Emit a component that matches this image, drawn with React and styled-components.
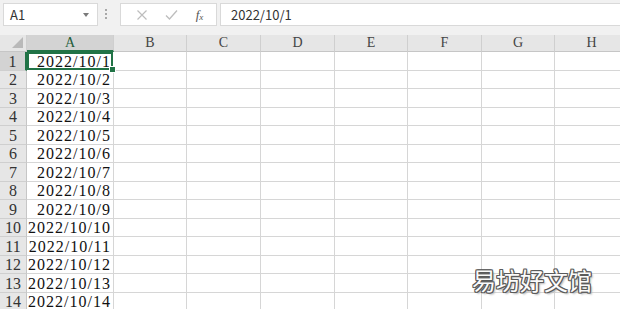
import React from "react";
import styled, { createGlobalStyle } from "styled-components";

const Global = createGlobalStyle`
  html, body { margin: 0; padding: 0; background: #fff; overflow: hidden; }
  body { width: 620px; height: 309px; }
`;

const Page = styled.div`
  position: relative;
  width: 620px;
  height: 309px;
  overflow: hidden;
  background: #fff;
`;

const Toolbar = styled.div`
  display: flex;
  align-items: flex-start;
  height: 35px;
  box-sizing: border-box;
  padding: 3px 0 0 3px;
  background: #f1f1f1;
  font-family: "Noto Sans CJK SC", "Noto Sans", sans-serif;
`;

const NameBox = styled.div`
  display: flex;
  align-items: center;
  justify-content: space-between;
  width: 95px;
  height: 23px;
  box-sizing: border-box;
  padding: 0 8px 0 6px;
  background: #fff;
  border: 1px solid #d9d9d9;
  font-size: 13px;
  color: #333;
`;

const Caret = styled.span`
  width: 0;
  height: 0;
  border-left: 3.5px solid transparent;
  border-right: 3.5px solid transparent;
  border-top: 4px solid #7a7a7a;
`;

const Dots = styled.div`
  display: flex;
  flex-direction: column;
  gap: 2px;
  margin: 6px 13px 0 7px;
  span {
    width: 2px;
    height: 2px;
    background: #a8a8a8;
  }
`;

const FxBox = styled.div`
  display: flex;
  align-items: center;
  justify-content: space-around;
  width: 97px;
  height: 23px;
  box-sizing: border-box;
  padding: 0 4px 0 6px;
  background: #fff;
  border: 1px solid #d9d9d9;
  color: #b8b8b8;
`;

const Fx = styled.span`
  font-family: "Liberation Serif", serif;
  font-style: italic;
  font-size: 13px;
  color: #555;
  sub { font-size: 9px; vertical-align: -1px; }
`;

const FormulaBox = styled.div`
  flex: 1;
  height: 23px;
  margin-left: 3px;
  box-sizing: border-box;
  padding: 0 0 0 10px;
  display: flex;
  align-items: center;
  background: #fff;
  border: 1px solid #d9d9d9;
  border-right: none;
  font-size: 13px;
  color: #333;
`;

const Grid = styled.div`
  display: grid;
  grid-template-columns: 27px 87px 73px 74px 74px 73px 74px 73px 74px;
  grid-template-rows: 17px repeat(14, 18.5px);
`;

const Corner = styled.div`
  position: relative;
  background: #e6e6e6;
  border-right: 1px solid #cfcfcf;
  border-bottom: 1px solid #c6c6c6;
  &::after {
    content: "";
    position: absolute;
    right: 3px;
    bottom: 3px;
    width: 0;
    height: 0;
    border-left: 11px solid transparent;
    border-bottom: 11px solid #b9b9b9;
  }
`;

const ColHead = styled.div`
  display: flex;
  align-items: center;
  justify-content: center;
  background: ${(p) => (p.$active ? "#d3d3d3" : "#e6e6e6")};
  border-right: 1px solid #cfcfcf;
  border-bottom: ${(p) => (p.$active ? "2px solid #217346" : "1px solid #c6c6c6")};
  font-family: "Liberation Serif", serif;
  font-size: 14px;
  color: ${(p) => (p.$active ? "#1f5c3a" : "#444")};
  box-sizing: border-box;
`;

const RowHead = styled.div`
  display: flex;
  align-items: center;
  justify-content: center;
  background: ${(p) => (p.$active ? "#d3d3d3" : "#e6e6e6")};
  border-right: ${(p) => (p.$active ? "2px solid #217346" : "1px solid #c6c6c6")};
  border-bottom: 1px solid #cfcfcf;
  font-family: "Liberation Serif", serif;
  font-size: 16px;
  color: #333;
  box-sizing: border-box;
  padding-top: 2px;
`;

const Cell = styled.div`
  position: relative;
  display: flex;
  align-items: center;
  justify-content: flex-end;
  padding: 2px 2px 0 0;
  border-right: 1px solid #d6d6d6;
  border-bottom: 1px solid #d6d6d6;
  box-sizing: border-box;
  font-family: "Liberation Serif", serif;
  font-size: 16px;
  letter-spacing: 1px;
  color: #111;
  white-space: nowrap;
  ${(p) =>
    p.$selected &&
    `
    box-shadow: inset 0 0 0 2px #217346;
    border-color: transparent;
  `}
`;

const Handle = styled.span`
  position: absolute;
  right: -3px;
  bottom: -3px;
  width: 5px;
  height: 5px;
  background: #217346;
  border: 1px solid #fff;
  z-index: 2;
`;

const Watermark = styled.div`
  position: absolute;
  left: 472px;
  top: 262px;
  font-family: "Noto Sans CJK SC", sans-serif;
  font-size: 24px;
  font-weight: 400;
  color: #fbfbfb;
  text-shadow:
    1px 0 0 #5a5a5a,
    -1px 0 0 #5a5a5a,
    0 1px 0 #5a5a5a,
    0 -1px 0 #5a5a5a,
    1px 1px 0 #5a5a5a,
    -1px -1px 0 #5a5a5a,
    1px -1px 0 #5a5a5a,
    -1px 1px 0 #5a5a5a,
    2px 2px 2px #b0b0b0;
`;

const COLS = ["A", "B", "C", "D", "E", "F", "G", "H"];
const ROWS = Array.from({ length: 14 }, (_, i) => i + 1);

export default function App() {
  return (
    <Page>
      <Global />
      <Toolbar>
        <NameBox>
          <span>A1</span>
          <Caret />
        </NameBox>
        <Dots>
          <span />
          <span />
          <span />
        </Dots>
        <FxBox>
          <svg width="12" height="12" viewBox="0 0 12 12">
            <path d="M1.5 1.5 L10.5 10.5 M10.5 1.5 L1.5 10.5" stroke="#bdbdbd" strokeWidth="1.2" fill="none" />
          </svg>
          <svg width="13" height="12" viewBox="0 0 13 12">
            <path d="M1 6.5 L4.5 10 L12 1.5" stroke="#bdbdbd" strokeWidth="1.3" fill="none" />
          </svg>
          <Fx>
            f<sub>x</sub>
          </Fx>
        </FxBox>
        <FormulaBox>2022/10/1</FormulaBox>
      </Toolbar>
      <Grid>
        <Corner />
        {COLS.map((c) => (
          <ColHead key={c} $active={c === "A"}>
            {c}
          </ColHead>
        ))}
        {ROWS.map((r) => (
          <React.Fragment key={r}>
            <RowHead $active={r === 1}>{r}</RowHead>
            {COLS.map((c) => (
              <Cell key={c} $selected={r === 1 && c === "A"}>
                {c === "A" ? `2022/10/${r}` : null}
                {r === 1 && c === "A" ? <Handle /> : null}
              </Cell>
            ))}
          </React.Fragment>
        ))}
      </Grid>
      <Watermark>易坊好文馆</Watermark>
    </Page>
  );
}
